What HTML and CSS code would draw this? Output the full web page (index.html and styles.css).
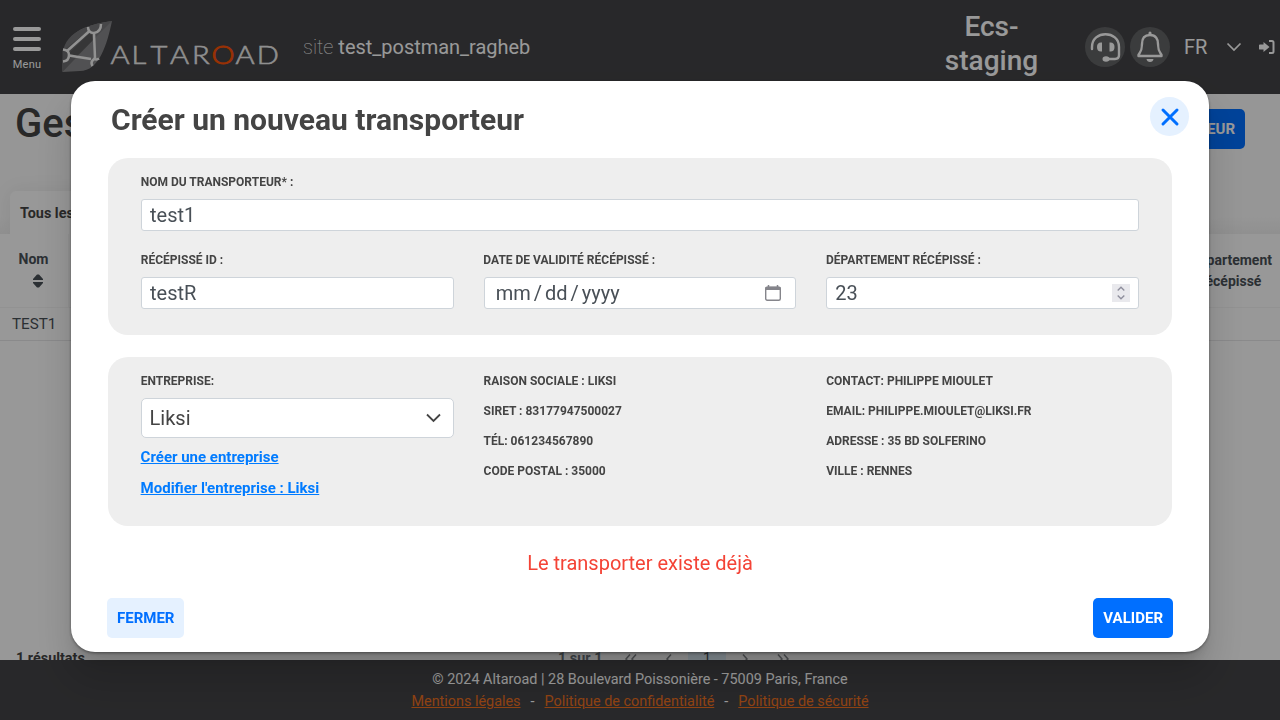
FILE: index.html
```html
<!DOCTYPE html>
<html lang="fr">
<head>
<meta charset="utf-8">
<title>Altaroad</title>
<link rel="stylesheet" href="styles.css">
</head>
<body>
<div class="app">
  <header class="header">
    <div class="menu">
      <svg width="28" height="24" viewBox="0 0 28 24" stroke="#fff" stroke-width="4" stroke-linecap="round"><path d="M2 2H26M2 12H26M2 22H26"/></svg>
      <span class="menu-label">Menu</span>
    </div>
    <svg class="logo" width="220" height="56" viewBox="60 18 220 56">
      <path d="M112 21C107 45 99 71 80 71L62.500 72C62 50 66 36 84 28Q96 23 112 21Z" fill="#88888a"/>
      <path d="M62.500 72L96 37L89 30L62.500 50Z" fill="#6c6c6e"/>
      <path d="M112 21Q96 23 84 28C70 34 64.500 43 63 51L87 31L96 37Z" fill="#77777a"/>
      <path d="M69 53L89 34L92 35V41L77 56Z" fill="#5a5a5c"/>
      <g fill="none" stroke="#f4f4f4" stroke-width="2.500">
        <path d="M89.500 31L66.500 51.500M94 33.500L95 58M69 55.500L91 59"/>
        <path d="M88 27Q88 33 94 33Q101 32 101 24M63 49.500Q69 50 69 55Q69 61 63 61.500M99 58.500Q97 60 94 59Q90 62 92.500 66"/>
      </g>
      <g class="logo-text" transform="scale(1.12 1)">
        <text x="98.700 117.400 134.400 151.700 171.500" y="63.800">ALTAR</text><text class="logo-o" x="188.800" y="63.800">O</text><text x="210.300 229.200" y="63.800">AD</text>
      </g>
    </svg>
    <div class="site"><span class="site-label">site</span> test_postman_ragheb</div>
    <div class="company">Ecs-staging</div>
    <div class="round">
      <svg width="32" height="32" viewBox="0 0 32 32" fill="none" stroke="#fff" stroke-width="2.400"><path d="M3 18V16C3 -1 30 -1 30 16V24Q30 28 26 28H17" stroke-linecap="round"/><path d="M13 11.500V20.500H12Q8 20.500 8 16T12 11.500ZM20.500 11.500V20.500H21.500Q25.500 20.500 25.500 16T21.500 11.500Z" fill="#fff" stroke="none"/><ellipse cx="17" cy="28" rx="3.500" ry="2.800" fill="#fff" stroke="none"/></svg>
    </div>
    <div class="round bell">
      <svg width="28" height="32" viewBox="0 0 28 32" fill="none" stroke="#fff" stroke-width="2.400" stroke-linejoin="round"><path d="M14 4C8 4 6 8 6 13C6 19 5 20 2.500 24V25H25.500V24C23 20 22 19 22 13C22 8 20 4 14 4Z"/><path d="M14 3V2" stroke-linecap="round" stroke-width="3"/><path d="M10.500 28H17.500Q17 31 14 31T10.500 28Z" fill="#fff" stroke="none"/></svg>
    </div>
    <div class="lang">FR</div>
    <svg class="lang-arrow" width="16" height="10" viewBox="0 0 16 10" fill="none" stroke="#fff" stroke-width="1.700"><path d="M1.500 1.500L8 8L14.500 1.500"/></svg>
    <svg class="exit" width="18" height="16" viewBox="0 0 18 16"><path d="M1 6Q1 5.500 2 5.500H5.500V3L11.500 8L5.500 13V10.500H2Q1 10.500 1 10Z" fill="#fff"/><path d="M11 2H14Q15.500 2 15.500 3.500V12.500Q15.500 14 14 14H11" fill="none" stroke="#fff" stroke-width="2"/></svg>
  </header>
  <main class="page">
    <div class="page-head"><h1 class="page-title">Gestion des transporteurs</h1><div class="btn btn-primary">CRÉER UN TRANSPORTEUR</div></div>
    <div class="tabs"><div class="tab">Tous les transporteurs</div></div>
    <div class="table">
      <div class="table-head">
        <div class="col-name">Nom<svg width="10" height="14" viewBox="0 0 10 14" fill="#495057"><path d="M0 6V5L4 .5H6L10 5V6ZM0 8V9L4 13.500H6L10 9V8Z"/></svg></div>
        <div class="col-dept">Département<br>récépissé</div>
      </div>
      <div class="table-row">TEST1</div>
    </div>
    <div class="pager">
      <div class="results">1 résultats</div>
      <div class="page-nav"><span class="pages">1 sur 1</span>
        <svg class="chev" width="12" height="10" viewBox="0 0 12 10"><path d="M5 .5L1 5L5 9.500M11 .5L7 5L11 9.500"/></svg>
        <svg class="chev" width="6" height="10" viewBox="0 0 6 10"><path d="M5 .5L1 5L5 9.500"/></svg>
        <span class="current">1</span>
        <svg class="chev" width="6" height="10" viewBox="0 0 6 10"><path d="M1 .5L5 5L1 9.500"/></svg>
        <svg class="chev" width="12" height="10" viewBox="0 0 12 10"><path d="M1 .5L5 5L1 9.500M7 .5L11 5L7 9.500"/></svg>
      </div>
    </div>
  </main>
  <footer class="footer">
    <div>© 2024 Altaroad | 28 Boulevard Poissonière - 75009 Paris, France</div>
    <div class="legal"><a>Mentions légales</a><span>-</span><a>Politique de confidentialité</a><span>-</span><a>Politique de sécurité</a></div>
  </footer>
</div>
<div class="overlay">
  <section class="modal">
    <div class="modal-head"><h2 class="modal-title">Créer un nouveau transporteur</h2>
      <div class="close"><svg width="20" height="20" viewBox="0 0 20 20" stroke="#006fff" stroke-width="3" stroke-linecap="round"><path d="M3 3L17 17M17 3L3 17"/></svg></div>
    </div>
    <div class="card card-form">
      <div class="label">NOM DU TRANSPORTEUR* :</div>
      <div class="input">test1</div>
      <div class="grid fields">
        <div><div class="label">RÉCÉPISSÉ ID :</div><div class="input">testR</div></div>
        <div><div class="label">DATE DE VALIDITÉ RÉCÉPISSÉ :</div><div class="input date"><span class="date-text"><span>mm</span><span>/</span><span>dd</span><span>/</span><span>yyyy</span></span>
          <svg width="16" height="16" viewBox="0 0 16 16"><path d="M2 1.500H14Q16 1.500 16 3.500V5H0V3.500Q0 1.500 2 1.500Z" fill="#85858b"/><path d="M3.500 0V3M12.500 0V3" stroke="#85858b" stroke-width="1.500"/><rect x=".7" y="2.500" width="14.600" height="12.700" rx="1.500" fill="none" stroke="#85858b" stroke-width="1.400"/></svg></div></div>
        <div><div class="label">DÉPARTEMENT RÉCÉPISSÉ :</div><div class="input number">23<span class="spin"><svg width="8" height="14" viewBox="0 0 8 14" fill="none" stroke="#8f8f9d" stroke-width="1.400"><path d="M.7 4.500L4 1.300L7.300 4.500M.7 9.500L4 12.700L7.300 9.500"/></svg></span></div></div>
      </div>
    </div>
    <div class="card card-company">
      <div class="grid">
        <div><div class="label">ENTREPRISE:</div>
          <div class="select">Liksi<svg width="15" height="10" viewBox="0 0 15 10" fill="none" stroke="#444" stroke-width="1.800"><path d="M1 1.500L7.500 8L14 1.500"/></svg></div>
          <a class="link">Créer une entreprise</a><a class="link">Modifier l'entreprise : Liksi</a></div>
        <div class="info"><div class="label">RAISON SOCIALE : LIKSI</div><div class="label">SIRET : 83177947500027</div><div class="label">TÉL: 061234567890</div><div class="label">CODE POSTAL : 35000</div></div>
        <div class="info"><div class="label">CONTACT: PHILIPPE MIOULET</div><div class="label">EMAIL: PHILIPPE.MIOULET@LIKSI.FR</div><div class="label">ADRESSE : 35 BD SOLFERINO</div><div class="label">VILLE : RENNES</div></div>
      </div>
    </div>
    <div class="error">Le transporter existe déjà</div>
    <div class="actions"><div class="btn btn-light">FERMER</div><div class="btn btn-primary">VALIDER</div></div>
  </section>
</div>
</body>
</html>
```
FILE: styles.css
```css
* { box-sizing: border-box; }
body { margin: 0; width: 1280px; height: 720px; overflow: hidden; font-family: Roboto, "Liberation Sans", sans-serif; color: #444; }
h1, h2 { margin: 0; }
svg { flex: none; display: block; }
.app { height: 720px; display: flex; flex-direction: column; background: #fafafa; }

.header { flex: none; height: 94px; background: #434346; color: #fff; display: flex; align-items: center; padding-left: 13px; }
.menu { width: 28px; display: flex; flex-direction: column; align-items: center; gap: 6px; padding-top: 4px; }
.menu-label { font-size: 11px; line-height: 15px; letter-spacing: .2px; }
.logo { margin: -2px 0 0 19px; }
.logo-text { font: 300 26px Lato, sans-serif; fill: #eee; stroke: #eee; stroke-width: .6px; }
.logo-o { fill: #ff5307; stroke: #ff5307; stroke-width: .9px; }
.site { flex: none; margin-left: 23px; width: 600px; font-size: 19.970px; white-space: nowrap; }
.site-label { font-weight: 100; }
.company { flex: none; width: 177px; padding: 0 40px; margin: -7px 5px 0 0; font-size: 28px; line-height: 34px; font-weight: 500; text-align: center; }
.round { flex: none; width: 40px; height: 40px; border-radius: 50%; background: #636466; display: flex; align-items: center; justify-content: center; }
.bell { margin-left: 5px; }
.lang { margin-left: 14px; font-size: 20px; }
.lang-arrow { margin-left: 19px; }
.exit { margin-left: 16px; }

.page { flex: 1; min-height: 0; overflow: hidden; display: flex; flex-direction: column; }
.page-head { flex: none; display: flex; justify-content: space-between; padding: 0 35px 0 15px; height: 97px; }
.page-title { font-size: 40px; line-height: 60px; font-weight: 500; }
.page-head .btn { margin-top: 15px; }
.tabs { flex: none; height: 43px; padding-left: 10px; background: linear-gradient(#fafafa 60%, #f0f0f0); }
.tab { width: 200px; height: 43px; background: #fefefe; border-radius: 6px 6px 0 0; padding: 0 10px; font-size: 14.400px; line-height: 46px; font-weight: 700; box-shadow: 0 0 20px rgba(0,0,0,.07); }
.table { flex: 1; background: #fefefe; }
.table-head { height: 74px; display: flex; justify-content: space-between; font-size: 14px; font-weight: 700; color: #495057; border-bottom: 1px solid #f4f4f4; padding: 0 8px 0 0; }
.col-name { width: 69px; height: 73px; padding: 16px 0 0 18.500px; line-height: 18px; border-right: 1px solid #f5f5f5; }
.col-name svg { margin: 6px 0 0 14px; }
.col-dept { padding-top: 16px; line-height: 21px; text-align: center; }
.table-row { height: 33px; padding-left: 12px; font-size: 15.200px; line-height: 32px; color: #495057; border-bottom: 1px solid #e6e6e8; }
.pager { flex: none; height: 16px; display: flex; background: #fefefe; padding-left: 16px; font-size: 14.400px; line-height: 30px; font-weight: 700; }
.results { width: 542px; }
.page-nav { display: flex; height: 30px; align-items: center; color: #6c757d; }
.pages { width: 67px; }
.chev { fill: none; stroke: #85898d; stroke-width: 1.500; margin: -1px 29px 0 0; }
.current { width: 38px; background: #e3f2fd; text-align: center; color: #495057; font-weight: 400; margin: 0 16px 0 -13px; }
.footer { flex: none; height: 60px; background: #434346; color: #fff; padding-top: 9px; text-align: center; font-size: 14.400px; line-height: 22px; }
.legal { display: flex; justify-content: center; gap: 10px; }
.legal a { color: #ee701f; text-decoration: underline; }

.overlay { position: fixed; inset: 0; background: rgba(0,0,0,.4); display: flex; justify-content: center; padding-top: 81px; }
.modal { width: 1138px; height: 571px; background: #fff; border-radius: 24px; padding: 0 36px 0 37px; box-shadow: 0 11px 15px -7px rgba(0,0,0,.2), 0 24px 38px 3px rgba(0,0,0,.14), 0 1px 3px rgba(0,0,0,.4); }
.modal-head { height: 77px; display: flex; justify-content: space-between; }
.modal-title { padding-left: 3px; font-size: 30px; line-height: 77px; font-weight: 700; }
.close { width: 39px; height: 39px; margin: 16px -16px 0 0; border-radius: 50%; background: #e5f1ff; display: flex; align-items: center; justify-content: center; }
.card { width: 1064px; background: #eee; border-radius: 20px; padding: 0 33px; }
.card-form { height: 177px; padding-top: 14px; }
.card-company { height: 169px; margin-top: 22px; padding-top: 14px; }
.label { font-size: 12px; line-height: 20px; font-weight: 700; white-space: nowrap; margin-left: -.3px; }
.input { height: 32px; margin-top: 7px; background: #fff; border: 1px solid #ced4da; border-radius: 3px; padding: 0 8px; font-size: 20px; line-height: 31px; color: #495057; }
.grid { display: grid; grid-template-columns: repeat(3, 1fr); gap: 30px; }
.fields { margin-top: 19px; }
.date, .number { display: flex; justify-content: space-between; align-items: center; }
.date { padding: 0 14px 0 11px; }
.date-text { display: flex; gap: 3px; }
.spin { width: 18px; height: 18px; background: #e9e9ed; display: flex; align-items: center; justify-content: center; }
.select { height: 40px; margin: 7px 0 8px; border: 1px solid #ced4da; border-radius: 5px; background: #fff; display: flex; align-items: center; justify-content: space-between; padding: 0 12px 0 7.600px; font-size: 20px; }
.link { display: block; color: #007bff; font-size: 15px; line-height: 23px; margin: 0 0 8px -.4px; font-weight: 700; text-decoration: underline; }
.info .label { margin-bottom: 10px; margin-left: -.1px; }
.error { margin: 25px 1px 0 0; text-align: center; color: #f44336; font-size: 20px; line-height: 24px; }
.actions { display: flex; justify-content: space-between; margin: 23px 0 0 -1px; }
.btn { height: 40px; border-radius: 5px; padding: 0 10px; font-size: 15px; line-height: 40px; font-weight: 700; }
.btn-primary { background: #006fff; color: #fff; }
.btn-light { background: #e5f1ff; color: #006fff; }
```
